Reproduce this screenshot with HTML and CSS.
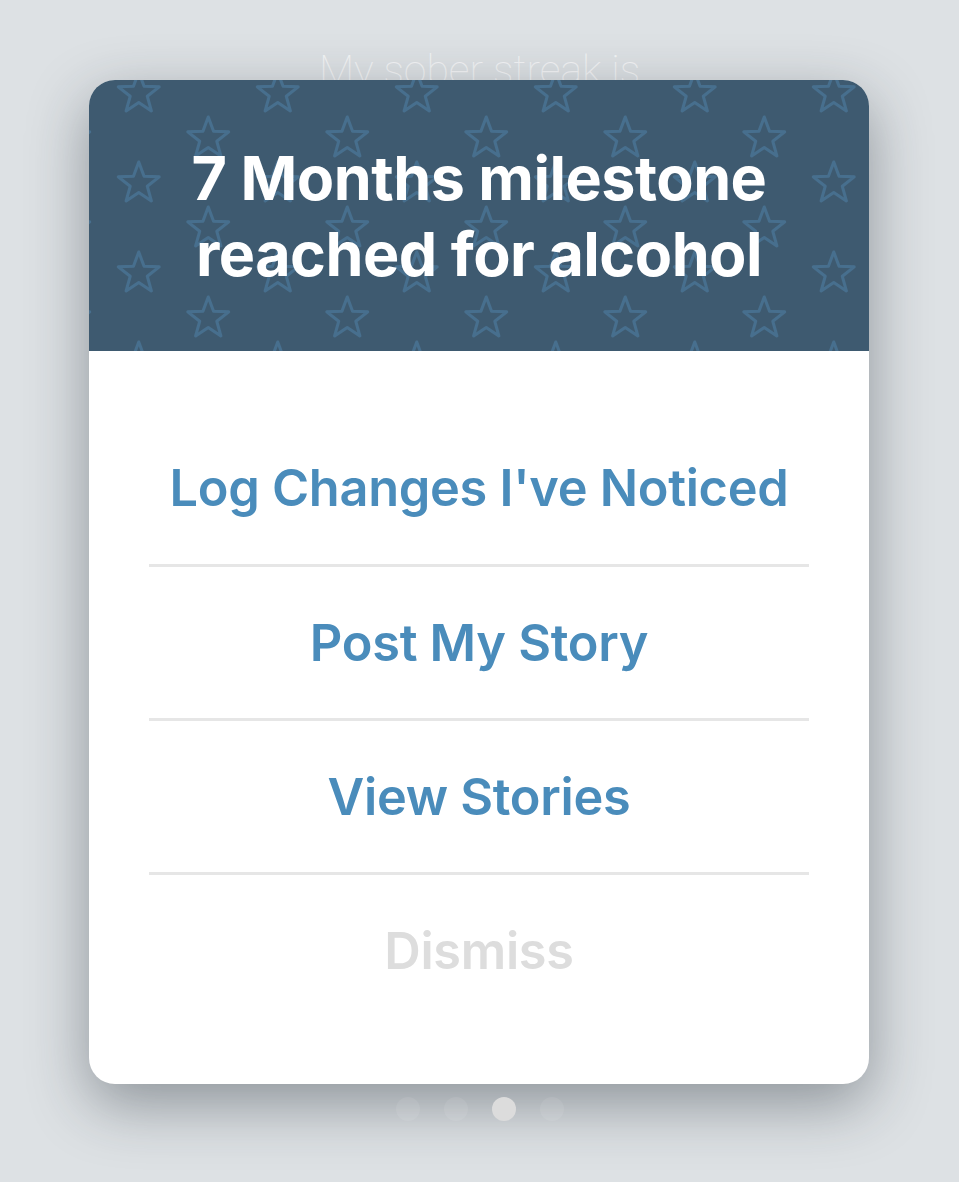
FILE: index.html
```html
<!DOCTYPE html>
<html lang="en">
<head>
    <meta charset="UTF-8">
    <meta name="viewport" content="width=device-width, initial-scale=1.0">
    <title>Milestone</title>
    <link rel="stylesheet" href="styles.css">
</head>
<body>

    <!-- page behind the popup -->
    <div class="screen">
        <p class="streak-label">My sober streak is</p>
        <div class="pager">
            <span class="dot"></span>
            <span class="dot"></span>
            <span class="dot active"></span>
            <span class="dot"></span>
        </div>
    </div>

    <div class="overlay">
        <div class="milestone-card">
            <div class="card-header">
                <h1>7 Months milestone reached for alcohol</h1>
            </div>
            <ul class="action-list">
                <li><a href="#">Log Changes I've Noticed</a></li>
                <li><a href="#">Post My Story</a></li>
                <li><a href="#">View Stories</a></li>
                <li><a href="#" class="dismiss">Dismiss</a></li>
            </ul>
        </div>
    </div>

</body>
</html>
```

FILE: styles.css
```css
* {
    box-sizing: border-box;
}

body {
    margin: 0;
    height: 1182px;
    overflow: hidden;
    font-family: Inter, "Noto Sans", sans-serif;
    background: #dde1e4;
}

.screen {
    height: 100%;
    display: flex;
    flex-direction: column;
    align-items: center;
    justify-content: space-between;
    padding: 46px 0 61px;
}

.streak-label {
    margin: 0;
    font-family: Roboto, "Open Sans", sans-serif;
    font-weight: 100;
    font-size: 41px;
    color: #f4f5f6;
}

.pager {
    position: relative;
    z-index: 2;
    display: flex;
    gap: 24px;
}

.dot {
    width: 24px;
    height: 24px;
    border-radius: 50%;
    background: rgba(255, 255, 255, 0.08);
}

.dot.active {
    background: #dcdcdc;
}

/* popup */
.overlay {
    position: fixed;
    inset: 0;
    z-index: 1;
    display: flex;
    justify-content: center;
    align-items: flex-start;
    padding: 80px 1px 0 0;
}

.milestone-card {
    width: 780px;
    background: white;
    border-radius: 26px;
    overflow: hidden;
    box-shadow: 0 20px 60px rgba(30, 40, 50, 0.42);
}

.card-header {
    height: 271px;
    display: flex;
    align-items: center;
    justify-content: center;
    background-color: #3e5a70;
    background-image: url("data:image/svg+xml;utf8,<svg xmlns='http://www.w3.org/2000/svg' width='139' height='90'><g fill='none' stroke='%23476f8e' stroke-width='3' stroke-linejoin='round'><path d='M34.75 3 L40.04 17.22 L55.2 17.86 L43.31 27.28 L47.39 41.89 L34.75 33.5 L22.11 41.89 L26.19 27.28 L14.3 17.86 L29.46 17.22 Z'/><path d='M104.25 48 L109.54 62.22 L124.7 62.86 L112.81 72.28 L116.89 86.89 L104.25 78.5 L91.61 86.89 L95.69 72.28 L83.8 62.86 L98.96 62.22 Z'/></g></svg>");
    background-position: 15px -11px;
}

.card-header h1 {
    margin: 0;
    width: 700px;
    text-align: center;
    color: white;
    font-size: 61px;
    font-weight: 700;
    line-height: 76px;
    letter-spacing: -0.5px;
}

.action-list {
    list-style: none;
    margin: 0;
    padding: 59px 60px 58px;
}

.action-list li {
    height: 154px;
    display: flex;
    align-items: center;
    justify-content: center;
}

.action-list li + li {
    border-top: 3px solid #e6e6e6;
}

.action-list a {
    color: #4a8cbb;
    text-decoration: none;
    font-size: 50.5px;
    font-weight: 600;
    letter-spacing: -0.3px;
}

.action-list a.dismiss {
    color: #dddddd;
}
```
